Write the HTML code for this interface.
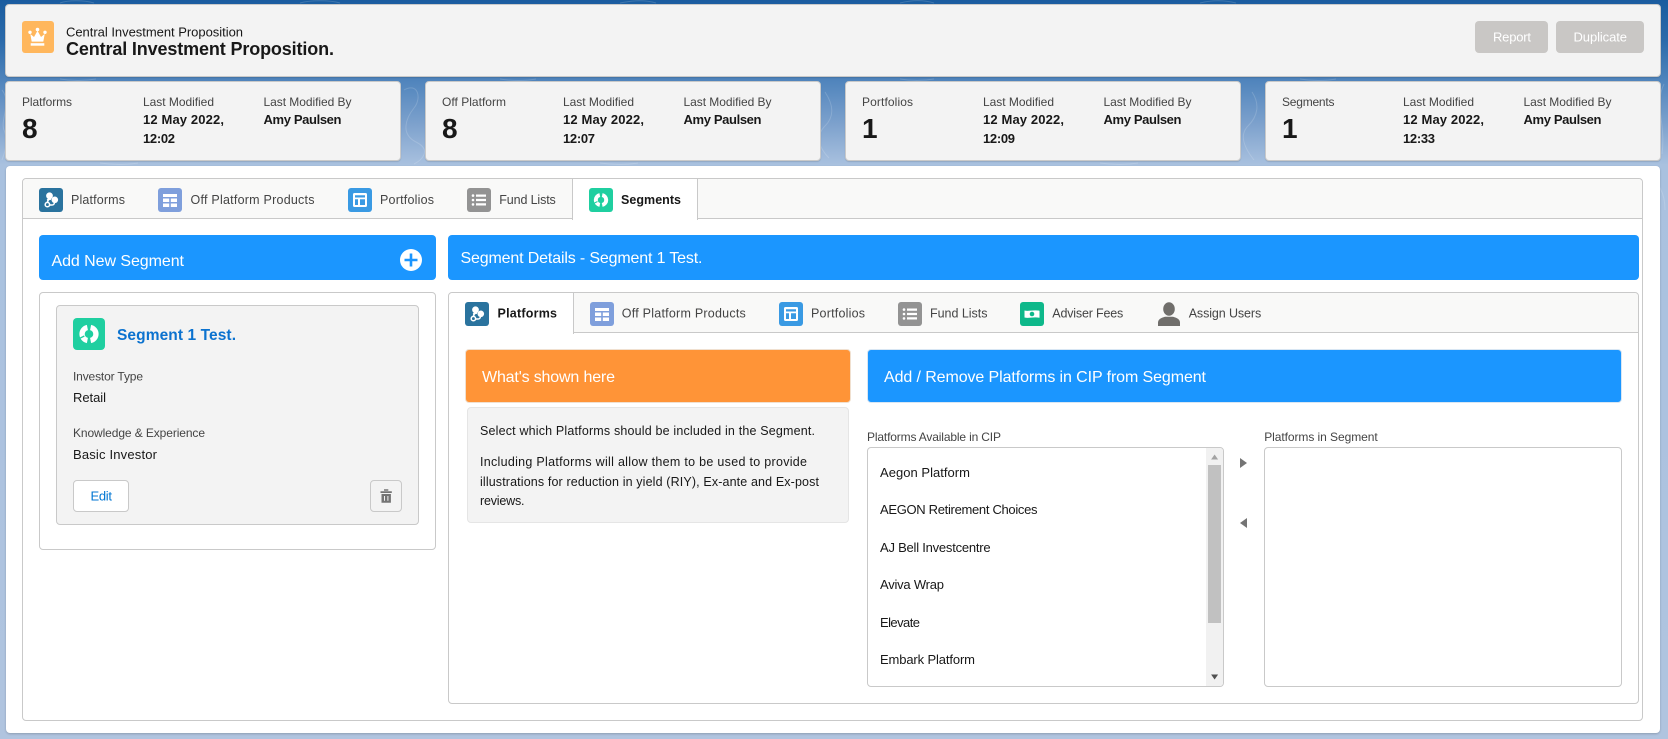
<!DOCTYPE html>
<html lang="en"><head><meta charset="utf-8"><title>Central Investment Proposition</title>
<style>
html,body{margin:0;padding:0}
body{width:1668px;height:739px;overflow:hidden;position:relative;font-family:"Liberation Sans",sans-serif;
background:linear-gradient(180deg,#1a5c9f 0,#2b6aaa 40px,#4f84bc 80px,#7ea2cd 125px,#a9c1df 165px,#b0c4df 739px)}
.b{position:absolute;box-sizing:border-box}
.card{background:#f3f3f3;border:1px solid #c9c9c9;border-radius:4px;box-shadow:0 1px 1px rgba(0,0,0,.12)}
svg.layer{position:absolute;left:0;top:0;width:1668px;height:739px}
text{font-family:"Liberation Sans",sans-serif;font-size:13px;fill:#181818}
.l{font-size:12px;fill:#444}
.v{font-size:13px;font-weight:bold;fill:#181818}
.n{font-size:28px;font-weight:bold;fill:#181818}
.t{font-size:12.5px;fill:#444}
.h{font-size:16px;fill:#fff}
</style></head><body>

<svg class="layer" viewBox="0 0 1668 739" fill="none" stroke="#fff" stroke-opacity=".16" stroke-width="1">
<path d="M404 90c14-8 18 8 10 18s-14 26 2 34 6 18-2 22M1170 84c-10 14 8 20 14 30s-8 26 4 40M1252 92c8 12 6 24-4 34s-2 24 6 34M825 92c8 12 10 24 0 34s-6 22 4 32M2 90c10 12-2 30 2 40s2 20-2 30M1645 170c8 10 20 16 20 40M1664 84c-10 20 2 40-2 70"/>
<path d="M60 3c8-3 24-3 34 0M300 3c10-3 30-3 40 0M620 3c14-3 26-3 36 0M900 3c12-3 24-3 34 0M1200 3c12-3 24-3 36 0M60 79c12 2 24 2 36 0M500 79c12 2 26 2 36 0M900 79c12 2 22 2 34 0M1300 79c12 2 26 2 36 0M100 163c14 2 26 2 38 0M600 163c14 2 26 2 38 0M1100 163c14 2 26 2 38 0"/>
</svg>

<!-- page header -->
<div class="b card" style="left:5px;top:4px;width:1656px;height:73px"></div>
<div class="b" style="left:1475px;top:21px;width:73px;height:32px;background:#c9c7c5;border-radius:4px"></div>
<div class="b" style="left:1556px;top:21px;width:88px;height:32px;background:#c9c7c5;border-radius:4px"></div>

<!-- stat cards -->
<div class="b card" style="left:5px;top:81px;width:396px;height:80px"></div>
<div class="b card" style="left:425px;top:81px;width:396px;height:80px"></div>
<div class="b card" style="left:845px;top:81px;width:396px;height:80px"></div>
<div class="b card" style="left:1265px;top:81px;width:396px;height:80px"></div>

<!-- main -->
<div class="b" style="left:6px;top:166px;width:1654px;height:567px;background:#fff;border-radius:4px;box-shadow:0 1px 2px rgba(0,0,0,.2)"></div>
<div class="b" style="left:22px;top:178px;width:1621px;height:543px;border:1px solid #c9c9c9;border-radius:4px;background:#fff"></div>
<div class="b" style="left:23px;top:179px;width:1619px;height:40px;background:#f9f9f8;border-bottom:1px solid #c9c9c9;border-radius:4px 4px 0 0"></div>
<div class="b" style="left:572px;top:179px;width:126px;height:41px;background:#fff;border-left:1px solid #c9c9c9;border-right:1px solid #c9c9c9"></div>

<!-- blue headers -->
<div class="b" style="left:39px;top:235px;width:397px;height:45px;background:#1b96ff;border-radius:4px"></div>
<div class="b" style="left:448px;top:235px;width:1191px;height:45px;background:#1b96ff;border-radius:4px"></div>

<!-- left panel -->
<div class="b" style="left:39px;top:292px;width:397px;height:258px;border:1px solid #c9c9c9;border-radius:4px;background:#fff"></div>
<div class="b card" style="left:56px;top:305px;width:363px;height:220px;box-shadow:none"></div>
<div class="b" style="left:73px;top:480px;width:56px;height:32px;background:#fff;border:1px solid #c9c9c9;border-radius:4px"></div>
<div class="b" style="left:370px;top:480px;width:32px;height:32px;background:#f3f3f3;border:1px solid #c9c9c9;border-radius:4px"></div>

<!-- right panel -->
<div class="b" style="left:448px;top:292px;width:1191px;height:412px;border:1px solid #c9c9c9;border-radius:4px;background:#fff"></div>
<div class="b" style="left:449px;top:293px;width:1189px;height:40px;background:#f9f9f8;border-bottom:1px solid #c9c9c9;border-radius:4px 4px 0 0"></div>
<div class="b" style="left:449px;top:293px;width:125px;height:41px;background:#fff;border-right:1px solid #c9c9c9;border-radius:4px 0 0 0"></div>

<div class="b" style="left:465px;top:349px;width:386px;height:54px;background:#ff9437;border:1px solid #f0e0d0;border-radius:4px"></div>
<div class="b" style="left:467px;top:407px;width:382px;height:116px;background:#f3f3f3;border:1px solid #e5e5e5;border-radius:4px"></div>
<div class="b" style="left:867px;top:349px;width:755px;height:54px;background:#1b96ff;border:1px solid #d8e6f3;border-radius:4px"></div>

<div class="b" style="left:867px;top:447px;width:357px;height:240px;background:#fff;border:1px solid #c9c9c9;border-radius:4px"></div>
<div class="b" style="left:1206px;top:448px;width:17px;height:238px;background:#f1f1f1;border-radius:0 3px 3px 0"></div>
<div class="b" style="left:1208px;top:465px;width:13px;height:158px;background:#c1c1c1"></div>
<div class="b" style="left:1264px;top:447px;width:358px;height:240px;background:#fff;border:1px solid #c9c9c9;border-radius:4px"></div>

<svg class="layer" viewBox="0 0 1668 739">
<defs>
<g id="ip"><rect width="24" height="24" rx="3" fill="#2a739e"/><circle cx="10.5" cy="7.8" r="3.4" fill="#fff"/><circle cx="15.8" cy="11.8" r="3.3" fill="#fff"/><path d="M10 10.5l-1.6 3.5M8 12l4-1" stroke="#fff" stroke-width="1.6" fill="none"/><circle cx="8.4" cy="16.6" r="2.2" fill="none" stroke="#fff" stroke-width="1.5"/><path d="M10.6 17h2.4c1.5 0 2.3-1.2 2.5-2.4" stroke="#fff" stroke-width="1.4" fill="none"/></g>
<g id="io"><rect width="24" height="24" rx="3" fill="#7f9fdc"/><path d="M5 6h14v3H5zM5 10.5h6.2V14H5zM12.8 10.5H19V14h-6.2zM5 15.5h6.2V19H5zM12.8 15.5H19V19h-6.2z" fill="#fff"/></g>
<g id="ipf"><rect width="24" height="24" rx="3" fill="#3a9ae3"/><path d="M6.5 5h11A1.5 1.5 0 0 1 19 6.500v11a1.500 1.500 0 0 1-1.500 1.500h-11A1.500 1.500 0 0 1 5 17.500v-11A1.500 1.500 0 0 1 6.500 5zM7 7.200v2.300h10V7.200zM7 11.300V17h3v-5.700zM12 11.300V17h5v-5.700z" fill="#fff" fill-rule="evenodd"/></g>
<g id="il"><rect width="24" height="24" rx="3" fill="#939393"/><path d="M9 6.500h10v2.200H9zM9 10.900h10v2.200H9zM9 15.300h10v2.200H9z" fill="#fff"/><circle cx="6" cy="7.600" r="1.300" fill="#fff"/><circle cx="6" cy="12" r="1.300" fill="#fff"/><circle cx="6" cy="16.400" r="1.300" fill="#fff"/></g>
<g id="is"><rect width="24" height="24" rx="3" fill="#1fcfa0"/><path d="M10.800 7.100A5 5 0 0 0 10.800 16.900" stroke="#fff" stroke-width="4" fill="none"/><path d="M13.200 7.100A5 5 0 0 1 13.200 16.900" stroke="#fff" stroke-width="4" fill="none"/><path d="M4.500 15.500l4-2" stroke="#1fcfa0" stroke-width="1"/></g>
<g id="if"><rect width="24" height="24" rx="3" fill="#0eb88a"/><path d="M4.500 8.500c4 1.200 7-.8 15 .2v7c-7-1-11 1-15-.2z" fill="#fff"/><circle cx="12" cy="12" r="2.300" fill="#0eb88a"/></g>
</defs>

<!-- header -->
<rect x="22" y="21" width="32" height="32" rx="3" fill="#ffb75d"/>
<g fill="#fff"><circle cx="30" cy="32.300" r="1.700"/><circle cx="37.500" cy="29.500" r="1.800"/><circle cx="45" cy="32.300" r="1.700"/><path d="M30.300 34l3.700 3 3.500-6.200L41 37l3.700-3-1.400 7.600H31.700z"/><rect x="30.700" y="43.200" width="13.600" height="2.500"/></g>
<text x="66" y="36.500" textLength="177">Central Investment Proposition</text>
<text x="66" y="55" style="font-size:18px;font-weight:bold" textLength="268">Central Investment Proposition.</text>
<text x="1493" y="41.500" style="fill:#fff" textLength="38">Report</text>
<text x="1573.500" y="41.500" style="fill:#fff" textLength="53.500">Duplicate</text>

<!-- stats -->
<g>
<text class="l" x="22" y="106" textLength="50">Platforms</text><text class="n" x="22" y="138">8</text>
<text class="l" x="143" y="106" textLength="71">Last Modified</text><text class="v" x="143" y="124" textLength="81">12 May 2022,</text><text class="v" x="143" y="143" textLength="32">12:02</text>
<text class="l" x="263.500" y="106" textLength="88">Last Modified By</text><text class="v" x="263.500" y="124" textLength="78">Amy Paulsen</text>

<text class="l" x="442" y="106" textLength="64">Off Platform</text><text class="n" x="442" y="138">8</text>
<text class="l" x="563" y="106" textLength="71">Last Modified</text><text class="v" x="563" y="124" textLength="81">12 May 2022,</text><text class="v" x="563" y="143" textLength="32">12:07</text>
<text class="l" x="683.500" y="106" textLength="88">Last Modified By</text><text class="v" x="683.500" y="124" textLength="78">Amy Paulsen</text>

<text class="l" x="862" y="106" textLength="51">Portfolios</text><text class="n" x="862" y="138">1</text>
<text class="l" x="983" y="106" textLength="71">Last Modified</text><text class="v" x="983" y="124" textLength="81">12 May 2022,</text><text class="v" x="983" y="143" textLength="32">12:09</text>
<text class="l" x="1103.500" y="106" textLength="88">Last Modified By</text><text class="v" x="1103.500" y="124" textLength="78">Amy Paulsen</text>

<text class="l" x="1282" y="106" textLength="52.500">Segments</text><text class="n" x="1282" y="138">1</text>
<text class="l" x="1403" y="106" textLength="71">Last Modified</text><text class="v" x="1403" y="124" textLength="81">12 May 2022,</text><text class="v" x="1403" y="143" textLength="32">12:33</text>
<text class="l" x="1523.500" y="106" textLength="88">Last Modified By</text><text class="v" x="1523.500" y="124" textLength="78">Amy Paulsen</text>
</g>

<!-- outer tabs -->
<use href="#ip" x="39" y="188"/><text class="t" x="71" y="204" textLength="54">Platforms</text>
<use href="#io" x="158" y="188"/><text class="t" x="190.500" y="204" textLength="124">Off Platform Products</text>
<use href="#ipf" x="348" y="188"/><text class="t" x="380" y="204" textLength="54">Portfolios</text>
<use href="#il" x="467" y="188"/><text class="t" x="499.300" y="204" textLength="56.500">Fund Lists</text>
<use href="#is" x="589" y="188"/><text x="621" y="204" style="font-size:12.500px;font-weight:bold" textLength="60">Segments</text>

<!-- blue headers -->
<text class="h" x="51.500" y="266" textLength="132.500">Add New Segment</text>
<circle cx="411" cy="260" r="11" fill="#fff"/><path d="M411 253.500v13M404.500 260h13" stroke="#1b96ff" stroke-width="2.600"/>
<text class="h" x="460.500" y="263" textLength="242">Segment Details - Segment 1 Test.</text>

<!-- segment card -->
<use href="#is" transform="translate(73 318) scale(1.3333)"/>
<text x="117" y="340" style="font-size:15.500px;font-weight:bold;fill:#0b72cf" textLength="119">Segment 1 Test.</text>
<text class="l" x="73" y="380.500" textLength="70">Investor Type</text>
<text x="73" y="402" textLength="33">Retail</text>
<text class="l" x="73" y="437" textLength="132">Knowledge &amp; Experience</text>
<text x="73" y="459" textLength="84">Basic Investor</text>
<text x="90.500" y="500.500" style="fill:#0176d3" textLength="21.500">Edit</text>
<g fill="#747474"><path d="M380.500 491.200h11.300v1.800h-11.300zM384 489.300h4.300v1.400H384z"/><path d="M381.500 494h9.400v8.700h-9.400zM384 496v4.700h1v-4.700zM387.400 496v4.700h1v-4.700z" fill-rule="evenodd"/></g>

<!-- inner tabs -->
<use href="#ip" x="465" y="302"/><text x="497.500" y="317.500" style="font-size:12.500px;font-weight:bold" textLength="59.500">Platforms</text>
<use href="#io" x="590" y="302"/><text class="t" x="621.800" y="317.500" textLength="124">Off Platform Products</text>
<use href="#ipf" x="779" y="302"/><text class="t" x="811" y="317.500" textLength="54">Portfolios</text>
<use href="#il" x="898" y="302"/><text class="t" x="930" y="317.500" textLength="57.500">Fund Lists</text>
<use href="#if" x="1020" y="302"/><text class="t" x="1052.300" y="317.500" textLength="71">Adviser Fees</text>
<g fill="#706e6b"><ellipse cx="1169" cy="309" rx="5.800" ry="6.800"/><path d="M1158 326v-3.500c0-3.500 4-5 7-5.800h8c3 .8 7 2.300 7 5.800v3.500z"/></g>
<text class="t" x="1188.700" y="317.500" textLength="72.500">Assign Users</text>

<!-- orange / blue -->
<text class="h" x="482" y="382" textLength="133">What's shown here</text>
<text class="h" x="884" y="382" textLength="322">Add / Remove Platforms in CIP from Segment</text>
<text x="480" y="435" style="font-size:12.500px" textLength="335">Select which Platforms should be included in the Segment.</text>
<text x="480" y="466" style="font-size:12.500px" textLength="327">Including Platforms will allow them to be used to provide</text>
<text x="480" y="486" style="font-size:12.500px" textLength="339">illustrations for reduction in yield (RIY), Ex-ante and Ex-post</text>
<text x="480" y="505" style="font-size:12.500px" textLength="44.500">reviews.</text>

<text class="l" x="867" y="441" textLength="134">Platforms Available in CIP</text>
<text class="l" x="1264.200" y="441" textLength="113.500">Platforms in Segment</text>

<text x="880" y="477" textLength="90">Aegon Platform</text>
<text x="880" y="514" textLength="157.500">AEGON Retirement Choices</text>
<text x="880" y="552" textLength="110.600">AJ Bell Investcentre</text>
<text x="880" y="589" textLength="64">Aviva Wrap</text>
<text x="880" y="627" textLength="40">Elevate</text>
<text x="880" y="664" textLength="95">Embark Platform</text>

<path d="M1214.600 454.500l3.500 5h-7z" fill="#a3a3a3"/>
<path d="M1214.600 679.500l3.500-5h-7z" fill="#505050"/>
<path d="M1240 458l7 5-7 5z" fill="#747474"/>
<path d="M1247 518l-7 5 7 5z" fill="#747474"/>
</svg>
</body></html>
